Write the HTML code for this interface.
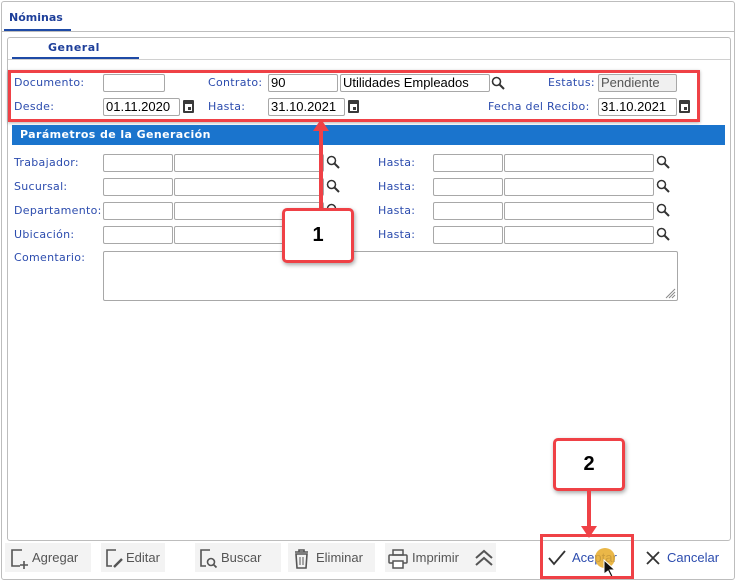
<!DOCTYPE html>
<html><head><meta charset="utf-8"><style>
*{box-sizing:border-box;margin:0;padding:0}
body{width:736px;height:581px;background:#fff;font-family:"DejaVu Sans","Liberation Sans",sans-serif;font-size:11px;position:relative;overflow:hidden}
.a{position:absolute}
.lbl{position:absolute;color:#2c4cae;font-size:11px;letter-spacing:0.3px;white-space:nowrap}
.in{position:absolute;border:1px solid #a8a8a8;border-radius:2px;height:18px;background:#fff;font-size:13px;color:#000;padding-left:2px;line-height:16px;white-space:nowrap;font-family:"Liberation Sans",sans-serif}
.cal{position:absolute;width:11px;height:13px;border:2px solid #3a3a3a;border-top-width:4px;border-radius:1px}
.cal:after{content:"";position:absolute;right:1px;bottom:1px;width:3px;height:3px;background:#3a3a3a}
.btn{position:absolute;top:543px;height:29px;background:#f3f3f3;color:#555;font-size:13px;line-height:29px;font-family:"Liberation Sans",sans-serif}
.red{position:absolute;border:3px solid #ef4146;}
.call{position:absolute;border:3px solid #ef4146;border-radius:5px;background:#fff;box-shadow:1px 2px 4px rgba(0,0,0,.35);text-align:center;font-weight:bold;font-size:20px;font-family:"Liberation Sans",sans-serif}
</style></head><body>
<div class="a" style="left:1px;top:1px;width:734px;height:579px;border:1px solid #bdbdbd;border-radius:3px"></div>
<div class="a" style="left:9px;top:11px;font-weight:bold;color:#1e3f9a;font-size:11px">Nóminas</div>
<div class="a" style="left:4px;top:29px;width:67px;height:3px;background:#1e4aa6"></div>
<div class="a" style="left:2px;top:31px;width:732px;height:1px;background:#bdbdbd"></div>
<div class="a" style="left:7px;top:37px;width:724px;height:504px;border:1px solid #bdbdbd;border-radius:3px"></div>
<div class="a" style="left:48px;top:41px;font-weight:bold;color:#1e3f9a;font-size:11px;letter-spacing:0.5px">General</div>
<div class="a" style="left:12px;top:57px;width:127px;height:3px;background:#1e4aa6"></div>
<div class="a" style="left:8px;top:59px;width:722px;height:1px;background:#d0d0d0"></div>

<div class="lbl" style="left:14px;top:76px">Documento:</div>
<div class="in" style="left:103px;top:74px;width:62px"></div>
<div class="lbl" style="left:208px;top:76px">Contrato:</div>
<div class="in" style="left:268px;top:74px;width:70px">90</div>
<div class="in" style="left:340px;top:74px;width:150px">Utilidades Empleados</div>
<svg class="a" style="left:491px;top:76px" width="14" height="14"><circle cx="5.5" cy="5.5" r="4" fill="none" stroke="#333" stroke-width="1.6"/><line x1="8.5" y1="8.5" x2="13" y2="13" stroke="#333" stroke-width="2"/></svg>
<div class="lbl" style="left:548px;top:76px">Estatus:</div>
<div class="in" style="left:598px;top:74px;width:79px;background:#f0f0f0;color:#555">Pendiente</div>

<div class="lbl" style="left:14px;top:100px">Desde:</div>
<div class="in" style="left:103px;top:98px;width:77px">01.11.2020</div>
<div class="cal" style="left:183px;top:100px"></div>
<div class="lbl" style="left:208px;top:100px">Hasta:</div>
<div class="in" style="left:268px;top:98px;width:77px">31.10.2021</div>
<div class="cal" style="left:348px;top:100px"></div>
<div class="lbl" style="left:488px;top:100px">Fecha del Recibo:</div>
<div class="in" style="left:598px;top:98px;width:79px">31.10.2021</div>
<div class="cal" style="left:679px;top:100px"></div>

<div class="red" style="left:8px;top:70px;width:692px;height:52px;box-shadow:0 1px 3px rgba(0,0,0,.3)"></div>

<div class="a" style="left:12px;top:125px;width:713px;height:20px;background:#1a74cd;color:#fff;font-weight:bold;font-size:11px;line-height:20px;padding-left:8px;letter-spacing:0.4px">Parámetros de la Generación</div>

<div class="lbl" style="left:14px;top:156px">Trabajador:</div>
<div class="lbl" style="left:14px;top:180px">Sucursal:</div>
<div class="lbl" style="left:14px;top:204px">Departamento:</div>
<div class="lbl" style="left:14px;top:228px">Ubicación:</div>
<div class="lbl" style="left:14px;top:251px">Comentario:</div>

<div class="in" style="left:103px;top:154px;width:70px"></div><div class="in" style="left:174px;top:154px;width:150px"></div>
<div class="in" style="left:103px;top:178px;width:70px"></div><div class="in" style="left:174px;top:178px;width:150px"></div>
<div class="in" style="left:103px;top:202px;width:70px"></div><div class="in" style="left:174px;top:202px;width:150px"></div>
<div class="in" style="left:103px;top:226px;width:70px"></div><div class="in" style="left:174px;top:226px;width:150px"></div>
<svg class="a" style="left:326px;top:155px" width="14" height="90"><g fill="none" stroke="#333"><g><circle cx="5.5" cy="5.5" r="4" stroke-width="1.5"/><line x1="8.5" y1="8.5" x2="13" y2="13" stroke-width="2"/></g><g transform="translate(0,24)"><circle cx="5.5" cy="5.5" r="4" stroke-width="1.5"/><line x1="8.5" y1="8.5" x2="13" y2="13" stroke-width="2"/></g><g transform="translate(0,48)"><circle cx="5.5" cy="5.5" r="4" stroke-width="1.5"/></g></g></svg>

<div class="lbl" style="left:378px;top:156px">Hasta:</div>
<div class="lbl" style="left:378px;top:180px">Hasta:</div>
<div class="lbl" style="left:378px;top:204px">Hasta:</div>
<div class="lbl" style="left:378px;top:228px">Hasta:</div>
<div class="in" style="left:433px;top:154px;width:70px"></div><div class="in" style="left:504px;top:154px;width:150px"></div>
<div class="in" style="left:433px;top:178px;width:70px"></div><div class="in" style="left:504px;top:178px;width:150px"></div>
<div class="in" style="left:433px;top:202px;width:70px"></div><div class="in" style="left:504px;top:202px;width:150px"></div>
<div class="in" style="left:433px;top:226px;width:70px"></div><div class="in" style="left:504px;top:226px;width:150px"></div>
<svg class="a" style="left:656px;top:155px" width="14" height="90"><g fill="none" stroke="#333"><g><circle cx="5.5" cy="5.5" r="4" stroke-width="1.5"/><line x1="8.5" y1="8.5" x2="13" y2="13" stroke-width="2"/></g><g transform="translate(0,24)"><circle cx="5.5" cy="5.5" r="4" stroke-width="1.5"/><line x1="8.5" y1="8.5" x2="13" y2="13" stroke-width="2"/></g><g transform="translate(0,48)"><circle cx="5.5" cy="5.5" r="4" stroke-width="1.5"/><line x1="8.5" y1="8.5" x2="13" y2="13" stroke-width="2"/></g><g transform="translate(0,72)"><circle cx="5.5" cy="5.5" r="4" stroke-width="1.5"/><line x1="8.5" y1="8.5" x2="13" y2="13" stroke-width="2"/></g></g></svg>
<div class="in" style="left:103px;top:251px;width:575px;height:50px"></div>
<svg class="a" style="left:664px;top:287px" width="12" height="12"><g stroke="#888"><line x1="2" y1="11" x2="11" y2="2"/><line x1="5" y1="11" x2="11" y2="5"/><line x1="8" y1="11" x2="11" y2="8"/></g></svg>

<!-- callout 1 -->
<div class="a" style="left:319px;top:128px;width:4px;height:82px;background:#ef4146"></div>
<svg class="a" style="left:313px;top:119px" width="16" height="12"><polygon points="8,0 16,12 0,12" fill="#ef4146"/></svg>
<div class="call" style="left:282px;top:208px;width:72px;height:55px;line-height:49px">1</div>

<!-- callout 2 -->
<div class="call" style="left:553px;top:438px;width:72px;height:53px;line-height:47px">2</div>
<div class="a" style="left:587px;top:490px;width:4px;height:38px;background:#ef4146"></div>
<svg class="a" style="left:581px;top:526px" width="16" height="12"><polygon points="0,0 16,0 8,12" fill="#ef4146"/></svg>

<!-- toolbar -->
<div class="btn" style="left:5px;width:86px"><svg class="a" style="left:4px;top:5px" width="20" height="22"><path d="M13 2H3v16h8" fill="none" stroke="#555" stroke-width="1.6"/><path d="M15 13v8M11 17h8" stroke="#555" stroke-width="1.6"/></svg><span style="position:absolute;left:27px">Agregar</span></div>
<div class="btn" style="left:101px;width:64px"><svg class="a" style="left:3px;top:5px" width="20" height="22"><path d="M12 2H3v16h5" fill="none" stroke="#555" stroke-width="1.6"/><path d="M10 19l8-8" stroke="#555" stroke-width="2.4"/></svg><span style="position:absolute;left:25px">Editar</span></div>
<div class="btn" style="left:195px;width:86px"><svg class="a" style="left:3px;top:5px" width="20" height="22"><path d="M12 2H3v16h5" fill="none" stroke="#555" stroke-width="1.6"/><circle cx="13" cy="14" r="3.5" fill="none" stroke="#555" stroke-width="1.6"/><path d="M15.5 16.5l3 3" stroke="#555" stroke-width="1.8"/></svg><span style="position:absolute;left:26px">Buscar</span></div>
<div class="btn" style="left:288px;width:87px"><svg class="a" style="left:4px;top:5px" width="20" height="22"><path d="M3 4h13M7 4V2h5v2M4 6h11l-1 14H5z" fill="none" stroke="#555" stroke-width="1.6"/><path d="M8 9v8M11 9v8" stroke="#555"/></svg><span style="position:absolute;left:28px">Eliminar</span></div>
<div class="btn" style="left:385px;width:111px"><svg class="a" style="left:3px;top:5px" width="20" height="22"><rect x="5" y="2" width="10" height="5" fill="none" stroke="#555" stroke-width="1.5"/><rect x="1" y="7" width="18" height="8" rx="1" fill="none" stroke="#555" stroke-width="1.5"/><rect x="5" y="13" width="10" height="7" fill="#fff" stroke="#555" stroke-width="1.5"/></svg><span style="position:absolute;left:27px">Imprimir</span><svg class="a" style="left:89px;top:6px" width="20" height="18"><path d="M2 9l8-7 8 7M2 16l8-7 8 7" fill="none" stroke="#555" stroke-width="2"/></svg></div>
<div class="a" style="left:545px;top:543px;height:29px;font-size:13px;line-height:29px;font-family:'Liberation Sans',sans-serif;color:#2c4cae;width:80px"><svg class="a" style="left:3px;top:7px" width="18" height="16"><path d="M1 8l5 6L17 1" fill="none" stroke="#333" stroke-width="1.8"/></svg><span style="position:absolute;left:27px;top:0">Aceptar</span></div>
<div class="a" style="left:595px;top:548px;width:20px;height:20px;border-radius:50%;background:rgba(230,170,40,.85)"></div>
<svg class="a" style="left:603px;top:559px" width="14" height="20"><path d="M1 1v14l4-3 3 6 2-1-3-6h5z" fill="#111" stroke="#fff" stroke-width="1"/></svg>
<div class="red" style="left:540px;top:534px;width:94px;height:45px"></div>
<div class="a" style="left:644px;top:543px;height:29px;font-size:13px;line-height:29px;font-family:'Liberation Sans',sans-serif;color:#2c4cae;width:85px"><svg class="a" style="left:1px;top:7px" width="16" height="16"><path d="M2 2l12 12M14 2L2 14" stroke="#333" stroke-width="1.8"/></svg><span style="position:absolute;left:23px;top:0;white-space:nowrap">Cancelar</span></div>
</body></html>
